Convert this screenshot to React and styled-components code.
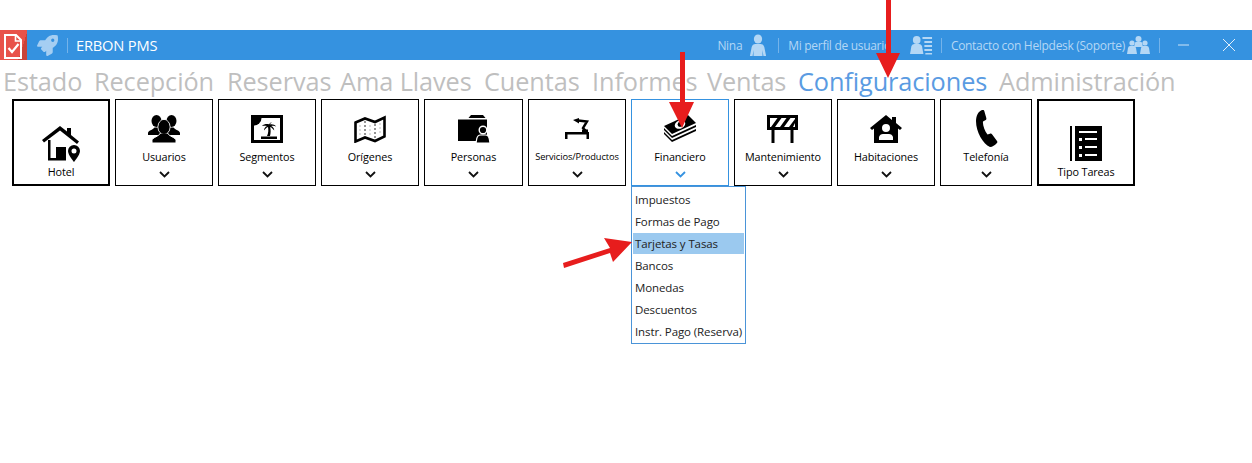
import styled, { createGlobalStyle } from "styled-components";
import { FaRocket } from "react-icons/fa";

const GlobalStyle = createGlobalStyle`
	html, body {
		background: #fff;
		margin: 0;
		padding: 0;
	}
	body {
		font-family: "Open Sans", "Noto Sans", sans-serif;
	}
`;

const Page = styled.div`
	box-sizing: border-box;
	height: 463px;
	overflow: hidden;
	padding-top: 30px;
	position: relative;
	width: 1252px;
`;

const TitleBar = styled.header`
	align-items: center;
	background-color: #3592e0;
	color: #fff;
	display: flex;
	height: 30px;
`;

const LogoBox = styled.div`
	background: linear-gradient(108deg, #e8524a 0 76%, #c9433a 76%);
	height: 30px;
	width: 27px;
`;

const Rocket = styled(FaRocket)`
	color: #a5cef2;
	font-size: 21px;
	margin-left: 10px;
`;

const Divider = styled.span`
	background-color: #74b3ea;
	height: 15px;
	margin: 0 ${({ $right }) => $right ?? 9}px 0 ${({ $left }) => $left ?? 9}px;
	width: 1px;
`;

const AppName = styled.span`
	font-size: 14.7px;
	letter-spacing: -0.2px;
	margin-left: -1px;
`;

const UserArea = styled.div`
	align-items: center;
	color: #b4d7f5;
	display: flex;
	font-size: 12px;
	letter-spacing: -0.3px;
	margin-left: auto;
`;

const UserText = styled.span`
	margin-right: ${({ $gap }) => $gap ?? 0}px;
	white-space: nowrap;
`;

const WindowButton = styled.button`
	align-items: center;
	background: none;
	border: 0;
	display: flex;
	height: 30px;
	justify-content: center;
	padding: 0;
	width: ${({ $width }) => $width}px;
`;

const Tabs = styled.nav`
	display: flex;
	gap: 13px;
	height: 39px;
	padding-left: 3px;
`;

const Tab = styled.span`
	color: ${({ $active }) => ($active ? "#5a9be2" : "#bfbfbf")};
	font-size: 25.3px;
	letter-spacing: -0.1px;
	line-height: 42px;
	white-space: nowrap;
	width: ${({ $width }) => $width}px;
`;

const Ribbon = styled.div`
	display: flex;
	gap: 5px;
	padding-left: 12px;
	position: relative;
`;

const RibbonButton = styled.div`
	align-items: center;
	border: ${({ $large }) => ($large ? 2 : 1)}px solid ${({ $open }) => ($open ? "#3592e0" : "#000")};
	box-sizing: border-box;
	color: #000;
	display: flex;
	flex-direction: column;
	height: 87px;
	padding-top: ${({ $large }) => ($large ? 22 : 8)}px;
	position: relative;
	width: ${({ $width }) => $width ?? 98}px;
`;

const IconSlot = styled.div`
	align-items: center;
	display: flex;
	height: 41px;
	justify-content: center;
`;

const Label = styled.span`
	font-size: ${({ $small }) => ($small ? 9.3 : 10.8)}px;
	font-weight: 500;
	height: 16px;
	letter-spacing: -0.1px;
	line-height: 16px;
	white-space: nowrap;
`;

const Caret = styled.svg`
	color: ${({ $open }) => ($open ? "#3592e0" : "#111")};
	height: 7px;
	margin-top: 6px;
	width: 11px;
`;

const Menu = styled.ul`
	background: #fff;
	border: 1px solid #4a94d8;
	box-sizing: border-box;
	height: 158px;
	left: 631px;
	list-style: none;
	margin: 0;
	padding: 2px 1px 0;
	position: absolute;
	top: 87px;
	width: 115px;
	z-index: 2;
`;

const MenuItem = styled.li`
	background-color: ${({ $selected }) => ($selected ? "#9bc9ef" : "transparent")};
	color: #222;
	font-size: 11.5px;
	height: 21px;
	letter-spacing: -0.1px;
	line-height: 22px;
	margin-bottom: 1px;
	padding-left: 2px;
	white-space: nowrap;
`;

const Annotation = styled.svg`
	height: 463px;
	left: 0;
	pointer-events: none;
	position: absolute;
	top: 0;
	width: 1252px;
	z-index: 3;
`;

const LogoMark = styled.svg`
	display: block;
`;

const Logo = () => (
	<LogoMark width="27" height="30" viewBox="0 0 27 30">
		<path d="M5 5h11l5 5v18H5z" fill="none" stroke="#fff" strokeWidth="2" />
		<path d="M15.500 4.500V11H22" fill="none" stroke="#fff" strokeWidth="1.600" />
		<path d="M8.500 18l3.500 4 6.500-8" fill="none" stroke="#fff" strokeWidth="2.200" />
	</LogoMark>
);

const UserIcon = () => (
	<svg width="18" height="22" viewBox="0 0 20 22" preserveAspectRatio="none" fill="#b4d7f5">
		<circle cx="10" cy="5" r="4.600" />
		<path d="M1 22 3 13q1-3 4-3h6q3 0 4 3l2 9h-3l-1-6v6H5v-6l-1 6z" />
	</svg>
);

const ProfileIcon = () => (
	<svg width="23" height="20" viewBox="0 0 24 20" preserveAspectRatio="none" fill="#b4d7f5">
		<circle cx="7" cy="5" r="4" />
		<path d="M0 19 1.500 11q1-2 3-2h5q2 0 3 2l1.500 8z" />
		<path d="M13 2h10v2H13zM15 6h8v2h-8zM15 10h8v2h-8zM15 14h8v2h-8zM16 18h7v1.500h-7z" />
	</svg>
);

const TeamIcon = () => (
	<svg width="23" height="19" viewBox="0 0 23 19" fill="#b4d7f5">
		<circle cx="11.500" cy="3" r="3" />
		<circle cx="5" cy="7" r="2.600" />
		<circle cx="18" cy="7" r="2.600" />
		<path d="M8 7q0-1 1-1h5q1 0 1 1l1 4H7z" />
		<path d="M0 18l1-6q.5-2 2-2h4q1.500 0 2 2l1 6zM13 18l1-6q.5-2 2-2h4q1.500 0 2 2l1 6z" />
	</svg>
);

const HotelIcon = () => (
	<svg width="38" height="36" viewBox="0 0 38 36">
		<path d="M0 14 18 0l7 5.500V2h4v7l8 6.500-2 2.500L18 4.500 2 16.500z" />
		<path d="M6 14h2.500v18H24v2.500H6z" />
		<path d="M14 21h10v13H14z" />
		<path fillRule="evenodd" d="M32 19a6 6 0 0 0-6 6c0 4 6 11 6 11s6-7 6-11a6 6 0 0 0-6-6zm0 3.500a2.500 2.500 0 1 1 0 5 2.500 2.500 0 0 1 0-5z" />
	</svg>
);

const UsersIcon = () => (
	<svg width="32" height="28" viewBox="0 0 32 28">
		<ellipse cx="8.500" cy="6" rx="5" ry="6" />
		<ellipse cx="23.500" cy="6" rx="5" ry="6" />
		<path d="M0 20v-2c0-2.500 5-3 6.500-5.500h4L14 20zM32 20v-2c0-2.500-5-3-6.500-5.500h-4L18 20z" />
		<ellipse cx="16" cy="12" rx="6" ry="7.500" stroke="#fff" />
		<path d="M4 28v-2.500c0-3 7-4 8.500-7.500h7c1.500 3.500 8.500 4.500 8.500 7.500V28z" stroke="#fff" />
		<ellipse cx="16" cy="12" rx="5.500" ry="7" />
	</svg>
);

const SegmentsIcon = () => (
	<svg width="32" height="28" viewBox="0 0 32 28">
		<path fillRule="evenodd" d="M0 0h32v28H0zM3 3v22h26V3z" />
		<path d="M3 3h7.500A7.500 7.500 0 0 1 3 10.500z" />
		<path d="M19 10c-1-1.500-6-1.500-8 1 2-.5 3.500-.5 5 0-2 1-3 2.500-3 4.500 1-1.500 2.500-3 4-3.500.5 3 .5 6-1 9h3c.8-3 .8-6 .2-9 1.500.5 3 2 4 3.500 0-2-1-3.500-3-4.500 1.500-.5 3-.5 5 .5-1.500-2-4.500-2.500-6.200-2 0-.8 1-1.800 2-2.300-1.500 0-2.500 1-3 2.800z" />
		<path d="M10 21.500h16v2.500H10z" />
	</svg>
);

const OriginsIcon = () => (
	<svg width="32" height="28" viewBox="0 0 32 28">
		<path d="M1.500 7.500 11 3.500l10 3.500 9.500-4.500v19l-9.500 4.500-10-3.500-9.500 4z" fill="none" stroke="#000" strokeWidth="2.600" />
		<path d="M11 6v16M21 9v15" stroke="#666" strokeWidth="1.400" strokeDasharray="2 2" />
		<path d="M6 10v12M16 10v12M26 8v12" stroke="#bbb" strokeWidth="1" strokeDasharray="2 2" />
	</svg>
);

const PeopleIcon = () => (
	<svg width="32" height="28" viewBox="0 0 32 28">
		<path d="M13 0h12l2.500 3h-17z" />
		<path d="M0 4.500h29V26H0z" />
		<circle cx="25" cy="15" r="3.800" stroke="#fff" strokeWidth="1.400" />
		<path d="M18 28l.8-4.500q.9-3.500 3.700-3.500h5q2.800 0 3.700 3.500L32 28z" stroke="#fff" strokeWidth="1.200" />
	</svg>
);

const ServicesIcon = () => (
	<svg width="26" height="22" viewBox="0 0 26 22">
		<path d="M1 14h24v7h-2.500v-4.500h-19V21H1z" />
		<path d="M22 13l-3-3 4-6.500L14 2.500" fill="none" stroke="#000" strokeWidth="2.400" />
		<path d="M9 2l6-2v5.500zM18 11.500h6V14h-6z" />
	</svg>
);

const FinanceIcon = () => (
	<svg width="32" height="28" viewBox="0 0 32 28">
		<path d="M0 11 24 0l8 8L8 19z" />
		<path d="M0 13l8 8 24-11v2L8 23l-8-8zM0 17l8 8 24-11v2L8 27l-8-8z" />
		<ellipse cx="16" cy="9.500" rx="5.500" ry="4" fill="#fff" transform="rotate(-24 16 9.500)" />
		<circle cx="16" cy="9.500" r="2.400" />
	</svg>
);

const MaintenanceIcon = () => (
	<svg width="32" height="28" viewBox="0 0 32 28">
		<path fillRule="evenodd" d="M0 0h31v15H0zM3 3v9h25V3z" />
		<path d="M4 12l6.500-9h4L8 12zM13 12l6.500-9h4L17 12zM22 12l6-8v4l-2 4z" />
		<path d="M4.500 15h3v13h-3zM23.500 15h3v13h-3z" />
	</svg>
);

const RoomsIcon = () => (
	<svg width="32" height="28" viewBox="0 0 32 28">
		<path fillRule="evenodd" d="M0 13 16 0l6 5V2h4v6l6 5-2 2-2-1.500V28H4V13.500L2 15zM16 9a4 4 0 1 0 0 8 4 4 0 0 0 0-8zM9 25h14v-3q-1-3-4-3h-6q-3 0-4 3z" />
	</svg>
);

const PhoneIcon = () => (
	<svg width="23" height="37" viewBox="0 0 23 37">
		<path d="M7 0c1-.3 2 0 2.300 1l2 7c.2 1 0 1.800-1 2.300L8 11.500c-.5 3 1.500 9.500 4.500 13l2.400-.8c1-.3 1.800 0 2.300.8l4.800 6.500c.5.8.5 1.700-.3 2.300-2 2-4 3.700-6.700 3.700C8 34 1 22 1 11 1 6 3 1.500 7 0z" />
	</svg>
);

const TasksIcon = () => (
	<svg width="32" height="35" viewBox="0 0 32 35">
		<path d="M0 0h2v35H0z" />
		<path
			fillRule="evenodd"
			d="M5 0h27v35H5zM9 5v2h18V5zM9 12v3h3v-3zM15 12v2h12v-2zM9 20v3h3v-3zM15 20v2h12v-2zM9 28v3h3v-3zM15 28v2h12v-2z"
		/>
	</svg>
);

const Chevron = ({ open }) => (
	<Caret $open={open} viewBox="0 0 11 7">
		<path d="M1 1l4.500 4.500L10 1" fill="none" stroke="currentColor" strokeWidth="1.800" />
	</Caret>
);

const tabs = [
	["Estado", 78],
	["Recepción", 120],
	["Reservas", 100],
	["Ama Llaves", 131],
	["Cuentas", 95],
	["Informes", 102],
	["Ventas", 78],
	["Configuraciones", 188],
	["Administración", 178],
];

const buttons = [
	{ label: "Hotel", Icon: HotelIcon, large: true },
	{ label: "Usuarios", Icon: UsersIcon },
	{ label: "Segmentos", Icon: SegmentsIcon },
	{ label: "Orígenes", Icon: OriginsIcon },
	{ label: "Personas", Icon: PeopleIcon, width: 99 },
	{ label: "Servicios/Productos", Icon: ServicesIcon, small: true },
	{ label: "Financiero", Icon: FinanceIcon, open: true },
	{ label: "Mantenimiento", Icon: MaintenanceIcon },
	{ label: "Habitaciones", Icon: RoomsIcon },
	{ label: "Telefonía", Icon: PhoneIcon, width: 92 },
	{ label: "Tipo Tareas", Icon: TasksIcon, large: true },
];

const menuItems = [
	"Impuestos",
	"Formas de Pago",
	"Tarjetas y Tasas",
	"Bancos",
	"Monedas",
	"Descuentos",
	"Instr. Pago (Reserva)",
];

const App = () => (
	<Page>
		<GlobalStyle />
		<TitleBar>
			<LogoBox>
				<Logo />
			</LogoBox>
			<Rocket />
			<Divider />
			<AppName>ERBON PMS</AppName>
			<UserArea>
				<UserText $gap={7}>Nina</UserText>
				<UserIcon />
				<Divider $left={11} />
				<UserText $gap={19}>Mi perfil de usuario</UserText>
				<ProfileIcon />
				<Divider $left={8} />
				<UserText $gap={2}>Contacto con Helpdesk (Soporte)</UserText>
				<TeamIcon />
				<Divider $left={9} $right={0} />
				<WindowButton $width={46}>
					<svg width="11" height="2">
						<path d="M0 1h11" stroke="#cfe4f7" />
					</svg>
				</WindowButton>
				<WindowButton $width={46}>
					<svg width="12" height="12">
						<path d="M0 0l12 12M12 0L0 12" stroke="#e3f0fb" />
					</svg>
				</WindowButton>
			</UserArea>
		</TitleBar>
		<Tabs>
			{tabs.map(([name, width]) => (
				<Tab key={name} $width={width} $active={name === "Configuraciones"}>
					{name}
				</Tab>
			))}
		</Tabs>
		<Ribbon>
			{buttons.map(({ label, Icon, large, small, open, width }) => (
				<RibbonButton key={label} $large={large} $open={open} $width={width}>
					<IconSlot>
						<Icon />
					</IconSlot>
					<Label $small={small}>{label}</Label>
					{!large && <Chevron open={open} />}
				</RibbonButton>
			))}
			<Menu>
				{menuItems.map((item) => (
					<MenuItem key={item} $selected={item === "Tarjetas y Tasas"}>
						{item}
					</MenuItem>
				))}
			</Menu>
		</Ribbon>
		<Annotation viewBox="0 0 1252 463">
			<g fill="#e71d1d">
				<path d="M886 0h5v53h9l-12 25-12-25h10z" />
				<path d="M680 52h5v50h9l-12 26-13-26h11z" />
				<path d="M563 263l47-15-6-10 28 4-19 20-3-9-46 15z" />
			</g>
		</Annotation>
	</Page>
);

export default App;
